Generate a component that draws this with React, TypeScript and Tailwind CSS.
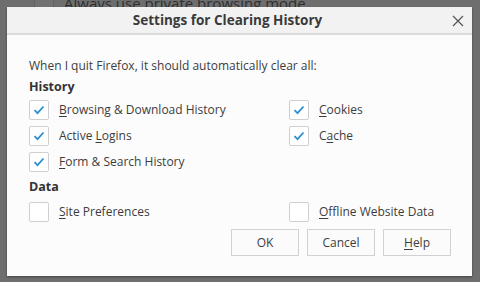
import React from "react";

const font = { fontFamily: '"Open Sans", "Noto Sans", sans-serif' };

function Check({ checked }: { checked: boolean }) {
  return (
    <span className="flex h-[20px] w-[20px] items-center justify-center rounded-[2px] border border-[#cfcfcf] bg-white">
      {checked && (
        <svg width="12" height="10" viewBox="0 0 12 10">
          <path d="M1.5 5.2 L4.5 8.2 L10.5 1.5" fill="none" stroke="#2b8fd0" strokeWidth="1.8" />
        </svg>
      )}
    </span>
  );
}

function Option({ checked, label, u }: { checked: boolean; label: string; u: number }) {
  return (
    <div className="flex h-[26px] items-center gap-[10px]">
      <Check checked={checked} />
      <span className="text-[12px] text-[#3c3c3c]">
        {label.slice(0, u)}
        <span className="underline underline-offset-2">{label[u]}</span>
        {label.slice(u + 1)}
      </span>
    </div>
  );
}

function Btn({ label, u }: { label: string; u?: number }) {
  return (
    <button className="h-[27px] w-[68px] border border-[#d2d2d2] bg-[#fbfbfb] text-[12px] text-[#3c3c3c]">
      {u === undefined ? (
        label
      ) : (
        <>
          {label.slice(0, u)}
          <span className="underline underline-offset-2">{label[u]}</span>
          {label.slice(u + 1)}
        </>
      )}
    </button>
  );
}

export default function App() {
  return (
    <div className="relative h-[282px] w-[480px] overflow-hidden bg-[#6e6e6e]" style={font}>
      {/* window behind */}
      <div className="flex h-[7px] items-end overflow-hidden">
        <div className="h-full w-[34px] shrink-0" />
        <div className="h-full w-[20px] shrink-0 border-x border-[#626262] bg-[#727272]" />
        <span className="ml-[10px] -mb-[6px] whitespace-nowrap text-[15px] leading-[20px] text-[#2e2e2e]">
          Always use private browsing mode
        </span>
      </div>

      <div className="mx-[7px] flex h-[269px] w-[465px] flex-col bg-[#fcfcfc] shadow-[0_1px_2px_rgba(0,0,0,0.4)]">
        <div className="relative flex h-[28px] items-center justify-center border-b-2 border-[#dadada] bg-[#f2f2f2] pr-[24px]">
          <span className="text-[13.5px] font-bold text-[#3a3a3a]">Settings for Clearing History</span>
          <svg className="absolute right-[8px] top-[8px]" width="12" height="12" viewBox="0 0 12 12">
            <path d="M1 1 L11 11 M11 1 L1 11" stroke="#555" strokeWidth="1.2" />
          </svg>
        </div>

        <div className="flex flex-1 flex-col pl-[22px] pr-[21px]">
          <p className="mt-[22px] text-[12px] leading-[18px] text-[#3c3c3c]">
            When I quit Firefox, it should automatically clear all:
          </p>
          <p className="mt-[3px] text-[12.5px] font-bold leading-[18px] text-[#333]">History</p>
          <div className="mt-[1px] grid grid-cols-[260px_1fr]">
            <div className="flex flex-col">
              <Option checked label="Browsing & Download History" u={0} />
              <Option checked label="Active Logins" u={7} />
              <Option checked label="Form & Search History" u={0} />
            </div>
            <div className="flex flex-col">
              <Option checked label="Cookies" u={0} />
              <Option checked label="Cache" u={1} />
            </div>
          </div>
          <p className="mt-[3px] text-[12.5px] font-bold leading-[18px] text-[#333]">Data</p>
          <div className="mt-[3px] grid grid-cols-[260px_1fr]">
            <Option checked={false} label="Site Preferences" u={0} />
            <Option checked={false} label="Offline Website Data" u={0} />
          </div>
          <div className="mt-[4px] flex justify-end gap-[8px]">
            <Btn label="OK" />
            <Btn label="Cancel" />
            <Btn label="Help" u={0} />
          </div>
        </div>
      </div>
    </div>
  );
}
